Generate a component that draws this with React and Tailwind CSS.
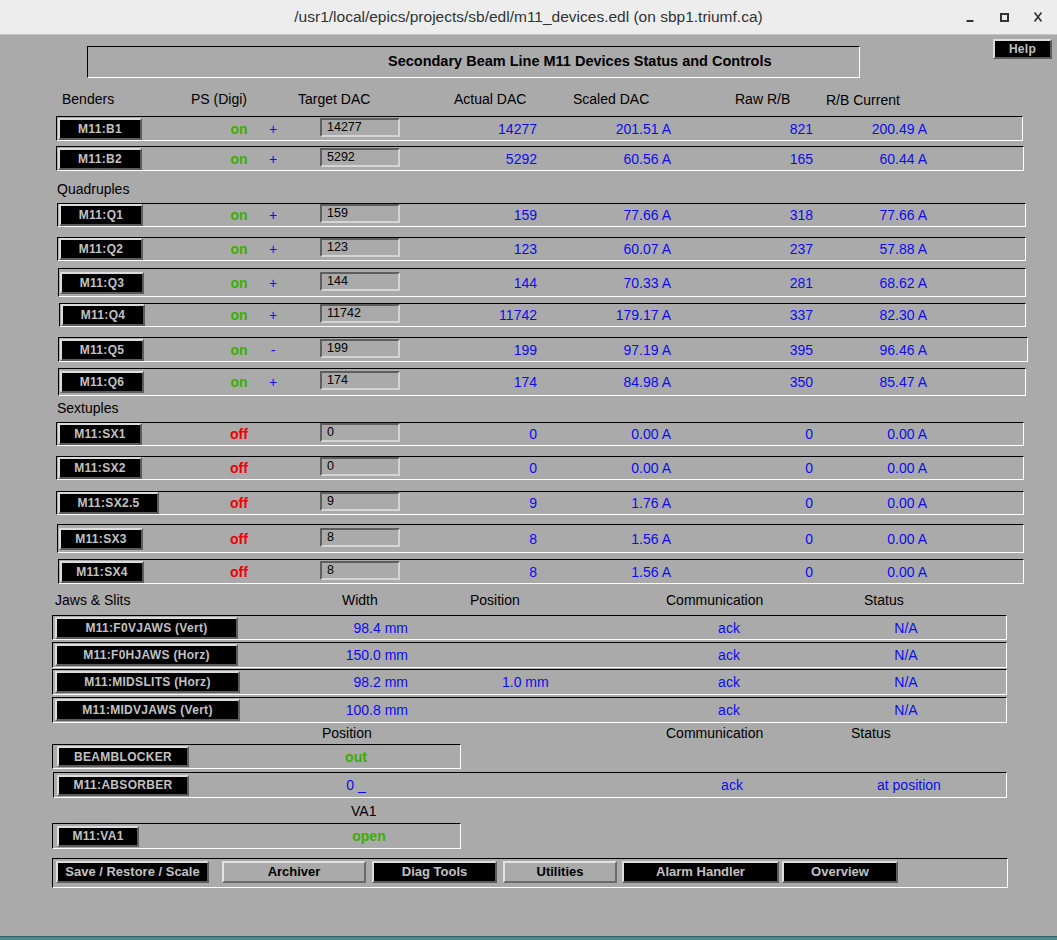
import React from "react";

const BOX = "border border-t-black border-l-black border-b-white border-r-white";
const BLUE = "text-[#0c0cf2]";
const GREEN = "text-[#3cae00]";

function DevBtn({ children, className = "" }) {
  return (
    <div
      className={`flex items-center justify-center bg-black text-[#c2c2c2] font-bold text-[12px] tracking-[0.3px] whitespace-nowrap border-2 border-t-[#dcdcdc] border-l-[#dcdcdc] border-b-[#5c5c5c] border-r-[#5c5c5c] ${className}`}
    >
      {children}
    </div>
  );
}

function GrayBtn({ children, className = "" }) {
  return (
    <div
      className={`flex items-center justify-center bg-[#aaaaaa] text-black font-bold text-[13px] whitespace-nowrap border-2 border-t-[#e2e2e2] border-l-[#e2e2e2] border-b-[#6a6a6a] border-r-[#6a6a6a] ${className}`}
    >
      {children}
    </div>
  );
}

function MagnetRow({ cls, c1, name, btn = "w-[84px]", on = true, sign, target, actual, scaled, raw, rb }) {
  return (
    <div className={`flex items-center shrink-0 ${BOX} ${cls}`}>
      <div className={`flex items-center ${c1}`}>
        <DevBtn className={`ml-[1px] h-[22px] ${btn}`}>{name}</DevBtn>
      </div>
      <div className={`w-[40px] text-center font-bold text-[14px] leading-[16px] ${on ? GREEN : "text-[#f00000]"}`}>
        {on ? "on" : "off"}
      </div>
      <div className={`w-[28px] text-center text-[14px] leading-[16px] ${BLUE}`}>{sign}</div>
      <div className="w-[33px]" />
      <div className="w-[80px] h-[19px] mb-[3px] border-2 border-t-[#5e5e5e] border-l-[#5e5e5e] border-b-[#d4d4d4] border-r-[#d4d4d4] text-[12.5px] leading-[15px] pl-[5px] text-black">
        {target}
      </div>
      <div className={`w-[137px] text-right text-[14px] leading-[16px] ${BLUE}`}>{actual}</div>
      <div className={`w-[134px] text-right text-[14px] leading-[16px] ${BLUE}`}>{scaled}</div>
      <div className={`w-[142px] text-right text-[14px] leading-[16px] ${BLUE}`}>{raw}</div>
      <div className={`w-[114px] text-right text-[14px] leading-[16px] ${BLUE}`}>{rb}</div>
    </div>
  );
}

function JawRow({ cls, name, btn = "w-[183px]", width, pos }) {
  return (
    <div className={`flex items-center shrink-0 ml-[52px] w-[955px] ${BOX} ${cls}`}>
      <div className="w-[190px] flex items-center">
        <DevBtn className={`ml-[2px] h-[22px] ${btn}`}>{name}</DevBtn>
      </div>
      <div className={`w-[165px] text-right text-[14px] leading-[16px] ${BLUE}`}>{width}</div>
      <div className="w-[94px]" />
      <div className={`w-[120px] text-left text-[14px] leading-[16px] ${BLUE}`}>{pos}</div>
      <div className={`w-[214px] text-center text-[14px] leading-[16px] ${BLUE}`}>ack</div>
      <div className={`w-[140px] text-center text-[14px] leading-[16px] ${BLUE}`}>N/A</div>
    </div>
  );
}

function TitleBar() {
  return (
    <div className="h-[35px] shrink-0 grid grid-cols-[1fr_auto_1fr] items-center bg-[#ededed] border-b border-[#c4c4c4]">
      <div />
      <div className="text-[15.5px] text-[#2e3436] whitespace-nowrap">
        /usr1/local/epics/projects/sb/edl/m11_devices.edl (on sbp1.triumf.ca)
      </div>
      <div className="flex justify-end items-center gap-[18px] pr-[11px]">
        <svg width="16" height="16" viewBox="0 0 16 16">
          <rect x="4.5" y="11" width="7" height="2" fill="#2e3436" />
        </svg>
        <svg width="16" height="16" viewBox="0 0 16 16">
          <rect x="5" y="5" width="7" height="7" fill="none" stroke="#2e3436" strokeWidth="2" />
        </svg>
        <svg width="16" height="16" viewBox="0 0 16 16">
          <path d="M4.5 3.5 L11.5 12.5 M11.5 3.5 L4.5 12.5" stroke="#2e3436" strokeWidth="1.6" />
        </svg>
      </div>
    </div>
  );
}

export default function App() {
  return (
    <div className="w-[1057px] h-[940px] flex flex-col bg-[#aaaaaa] overflow-hidden font-['Liberation_Sans',Arial,sans-serif] text-black">
      <TitleBar />
      <main className="flex-1 flex flex-col">
        {/* header row */}
        <div className="flex items-start mt-[4px] shrink-0">
          <div className={`ml-[87px] mt-[7px] w-[773px] h-[32px] flex items-center pl-[300px] font-bold text-[14.5px] whitespace-nowrap ${BOX}`}>
            Secondary Beam Line M11 Devices Status and Controls
          </div>
          <DevBtn className="ml-[133px] w-[59px] h-[20px] text-[12.5px]">Help</DevBtn>
        </div>

        {/* column headers */}
        <div className="flex mt-[13px] h-[16px] pl-[62px] text-[14px] leading-[16px] whitespace-nowrap shrink-0">
          <div className="w-[129px]">Benders</div>
          <div className="w-[107px]">PS (Digi)</div>
          <div className="w-[156px]">Target DAC</div>
          <div className="w-[119px]">Actual DAC</div>
          <div className="w-[162px]">Scaled DAC</div>
          <div className="w-[91px]">Raw R/B</div>
          <div className="mt-[1px]">R/B Current</div>
        </div>

        <MagnetRow cls="mt-[9px] ml-[56px] w-[967px] h-[25px]" c1="w-[162px]" name="M11:B1" sign="+" target="14277" actual="14277" scaled="201.51 A" raw="821" rb="200.49 A" />
        <MagnetRow cls="mt-[5px] ml-[56px] w-[968px] h-[25px]" c1="w-[162px]" name="M11:B2" sign="+" target="5292" actual="5292" scaled="60.56 A" raw="165" rb="60.44 A" />

        <div className="mt-[10px] h-[16px] pl-[57px] text-[14px] leading-[16px] shrink-0">Quadruples</div>

        <MagnetRow cls="mt-[6px] ml-[57px] w-[969px] h-[24px]" c1="w-[161px]" name="M11:Q1" sign="+" target="159" actual="159" scaled="77.66 A" raw="318" rb="77.66 A" />
        <MagnetRow cls="mt-[10px] ml-[57px] w-[969px] h-[24px]" c1="w-[161px]" name="M11:Q2" sign="+" target="123" actual="123" scaled="60.07 A" raw="237" rb="57.88 A" />
        <MagnetRow cls="mt-[7px] ml-[58px] w-[968px] h-[29px]" c1="w-[160px]" name="M11:Q3" sign="+" target="144" actual="144" scaled="70.33 A" raw="281" rb="68.62 A" />
        <MagnetRow cls="mt-[6px] ml-[59px] w-[967px] h-[24px]" c1="w-[159px]" name="M11:Q4" sign="+" target="11742" actual="11742" scaled="179.17 A" raw="337" rb="82.30 A" />
        <MagnetRow cls="mt-[10px] ml-[58px] w-[970px] h-[25px]" c1="w-[160px]" name="M11:Q5" sign="-" target="199" actual="199" scaled="97.19 A" raw="395" rb="96.46 A" />
        <MagnetRow cls="mt-[6px] ml-[58px] w-[968px] h-[28px]" c1="w-[160px]" name="M11:Q6" sign="+" target="174" actual="174" scaled="84.98 A" raw="350" rb="85.47 A" />

        <div className="mt-[4px] h-[16px] pl-[57px] text-[14px] leading-[16px] shrink-0">Sextuples</div>

        <MagnetRow cls="mt-[6px] ml-[56px] w-[968px] h-[24px]" c1="w-[162px]" name="M11:SX1" on={false} sign="" target="0" actual="0" scaled="0.00 A" raw="0" rb="0.00 A" />
        <MagnetRow cls="mt-[10px] ml-[56px] w-[968px] h-[24px]" c1="w-[162px]" name="M11:SX2" on={false} sign="" target="0" actual="0" scaled="0.00 A" raw="0" rb="0.00 A" />
        <MagnetRow cls="mt-[11px] ml-[56px] w-[968px] h-[24px]" c1="w-[162px]" btn="w-[101px]" name="M11:SX2.5" on={false} sign="" target="9" actual="9" scaled="1.76 A" raw="0" rb="0.00 A" />
        <MagnetRow cls="mt-[9px] ml-[57px] w-[967px] h-[29px]" c1="w-[161px]" name="M11:SX3" on={false} sign="" target="8" actual="8" scaled="1.56 A" raw="0" rb="0.00 A" />
        <MagnetRow cls="mt-[6px] ml-[58px] w-[966px] h-[25px]" c1="w-[160px]" name="M11:SX4" on={false} sign="" target="8" actual="8" scaled="1.56 A" raw="0" rb="0.00 A" />

        {/* Jaws header */}
        <div className="flex mt-[8px] h-[16px] pl-[55px] text-[14px] leading-[16px] whitespace-nowrap shrink-0">
          <div className="w-[287px]">Jaws &amp; Slits</div>
          <div className="w-[128px]">Width</div>
          <div className="w-[196px]">Position</div>
          <div className="w-[198px]">Communication</div>
          <div>Status</div>
        </div>

        <JawRow cls="mt-[7px] h-[25px]" name="M11:F0VJAWS (Vert)" width="98.4 mm" pos="" />
        <JawRow cls="mt-[2px] h-[26px]" name="M11:F0HJAWS (Horz)" width="150.0 mm" pos="" />
        <JawRow cls="mt-[1px] h-[26px]" btn="w-[185px]" name="M11:MIDSLITS (Horz)" width="98.2 mm" pos="1.0 mm" />
        <JawRow cls="mt-[2px] h-[26px]" btn="w-[185px]" name="M11:MIDVJAWS (Vert)" width="100.8 mm" pos="" />

        {/* Position header */}
        <div className="flex mt-[2px] h-[16px] pl-[322px] text-[14px] leading-[16px] whitespace-nowrap shrink-0">
          <div className="w-[344px]">Position</div>
          <div className="w-[185px]">Communication</div>
          <div>Status</div>
        </div>

        <div className={`flex items-center shrink-0 mt-[3px] ml-[52px] w-[409px] h-[25px] ${BOX}`}>
          <div className="w-[199px] flex items-center">
            <DevBtn className="ml-[4px] w-[132px] h-[21px]">BEAMBLOCKER</DevBtn>
          </div>
          <div className={`w-[208px] text-center font-bold text-[14px] leading-[16px] ${GREEN}`}>out</div>
        </div>

        <div className={`flex items-center shrink-0 mt-[3px] ml-[53px] w-[954px] h-[26px] ${BOX}`}>
          <div className="w-[198px] flex items-center">
            <DevBtn className="ml-[3px] w-[132px] h-[21px]">M11:ABSORBER</DevBtn>
          </div>
          <div className={`w-[208px] text-center text-[14px] leading-[16px] ${BLUE}`}>0 _</div>
          <div className="w-[162px]" />
          <div className={`w-[220px] text-center text-[14px] leading-[16px] ${BLUE}`}>ack</div>
          <div className={`ml-[35px] text-[14px] leading-[16px] ${BLUE}`}>at position</div>
        </div>

        <div className="mt-[5px] h-[16px] pl-[351px] text-[14px] leading-[16px] shrink-0">VA1</div>

        <div className={`flex items-center shrink-0 mt-[4px] ml-[52px] w-[409px] h-[26px] ${BOX}`}>
          <div className="w-[225px] flex items-center">
            <DevBtn className="ml-[4px] w-[82px] h-[21px]">M11:VA1</DevBtn>
          </div>
          <div className={`w-[182px] text-center font-bold text-[14px] leading-[16px] ${GREEN}`}>open</div>
        </div>

        {/* bottom buttons */}
        <div className={`flex items-start pt-[2px] shrink-0 mt-[9px] ml-[52px] w-[956px] h-[30px] ${BOX}`}>
          <DevBtn className="ml-[3px] w-[153px] h-[22px] text-[13px] tracking-[0px]">Save / Restore / Scale</DevBtn>
          <GrayBtn className="ml-[13px] w-[144px] h-[22px]">Archiver</GrayBtn>
          <DevBtn className="ml-[6px] w-[125px] h-[22px] text-[13px] tracking-[0px]">Diag Tools</DevBtn>
          <GrayBtn className="ml-[6px] w-[114px] h-[22px]">Utilities</GrayBtn>
          <DevBtn className="ml-[5px] w-[157px] h-[22px] text-[13px] tracking-[0px]">Alarm Handler</DevBtn>
          <DevBtn className="ml-[3px] w-[116px] h-[22px] text-[13px] tracking-[0px]">Overview</DevBtn>
        </div>
      </main>
      <div className="h-[4px] shrink-0 bg-[#4b8a8e] border-t border-[#3a5f66]" />
    </div>
  );
}
